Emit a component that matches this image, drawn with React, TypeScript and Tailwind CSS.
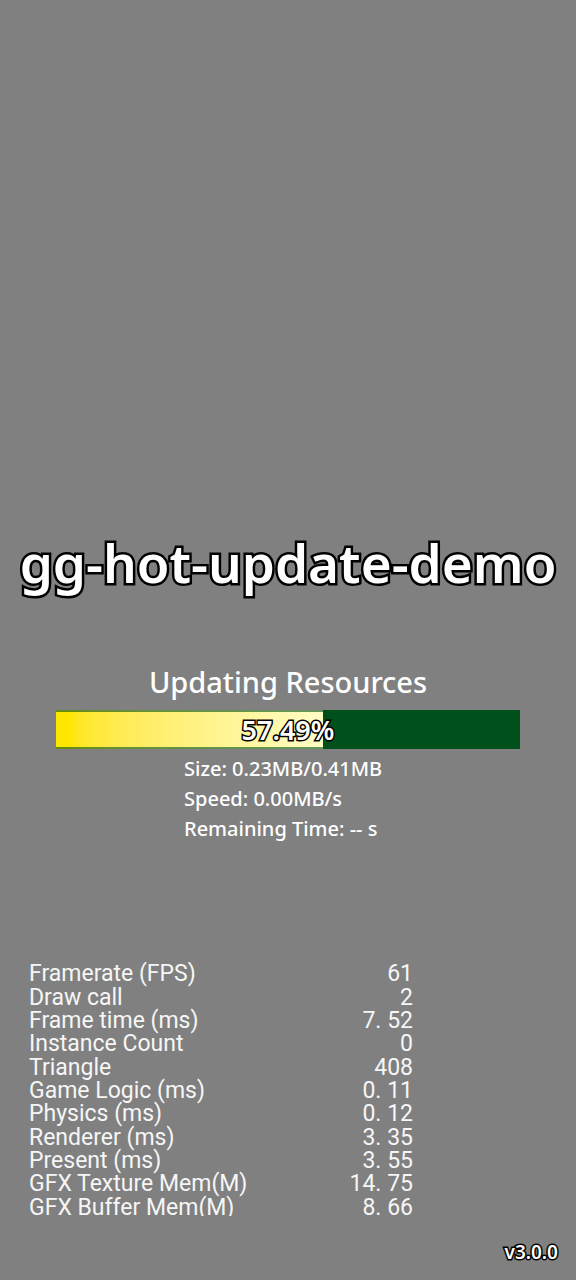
const stats: [string, string][] = [
  ['Framerate (FPS)', '61'],
  ['Draw call', '2'],
  ['Frame time (ms)', '7. 52'],
  ['Instance Count', '0'],
  ['Triangle', '408'],
  ['Game Logic (ms)', '0. 11'],
  ['Physics (ms)', '0. 12'],
  ['Renderer (ms)', '3. 35'],
  ['Present (ms)', '3. 55'],
  ['GFX Texture Mem(M)', '14. 75'],
  ['GFX Buffer Mem(M)', '8. 66'],
];

function ProgressBar({ value }: { value: number }) {
  return (
    <div
      role="progressbar"
      aria-label="Updating Resources"
      aria-valuenow={value}
      aria-valuemin={0}
      aria-valuemax={100}
      className="mx-14 grid h-[39px] bg-[#00501c]"
    >
      <div
        className="col-start-1 row-start-1 border-y-2 border-[#00501c]/60 bg-linear-to-r from-[#ffe600] from-5% to-[#fffdc4] bg-origin-border"
        style={{ width: `${value}%` }}
      />
      <span className="z-10 col-start-1 row-start-1 self-center text-center text-[27px] leading-[38px] font-semibold [-webkit-text-stroke:3px_#000] [paint-order:stroke_fill]">
        {value}%
      </span>
    </div>
  );
}

function StatsTable() {
  return (
    <table className="mr-[163px] -mb-[3px] ml-[29px] h-[257px] border-collapse font-[Roboto,sans-serif] text-[23px] leading-[23px] text-[#f6f6f6]">
      <tbody>
        {stats.map(([name, value]) => (
          <tr key={name}>
            <th scope="row" className="p-0 text-left font-normal whitespace-nowrap">
              {name}
            </th>
            <td className="p-0 text-right whitespace-nowrap">{value}</td>
          </tr>
        ))}
      </tbody>
    </table>
  );
}

export default function App() {
  return (
    <main className="flex min-h-screen flex-col bg-[#808080] font-['Noto_Sans',sans-serif] text-white">
      <h1 className="mt-[525px] text-center text-[53px] leading-[76px] font-semibold whitespace-nowrap [-webkit-text-stroke:5px_#000] [paint-order:stroke_fill]">
        gg-hot-update-demo
      </h1>
      <section className="mt-[61px]">
        <h2 className="text-center text-[29px] leading-[40px] font-medium">Updating Resources</h2>
        <div className="mt-2">
          <ProgressBar value={57.49} />
        </div>
        <div className="mt-[5px] ml-46 text-[20px] leading-[30px] font-medium">
          <p>Size: 0.23MB/0.41MB</p>
          <p>Speed: 0.00MB/s</p>
          <p>Remaining Time: -- s</p>
        </div>
      </section>
      <section className="mt-[118px] grid overflow-hidden">
        <StatsTable />
      </section>
      <footer className="mt-auto mr-[18px] mb-4 text-right text-[19px] leading-[24px] font-semibold [-webkit-text-stroke:3px_#000] [paint-order:stroke_fill]">
        v3.0.0
      </footer>
    </main>
  );
}
